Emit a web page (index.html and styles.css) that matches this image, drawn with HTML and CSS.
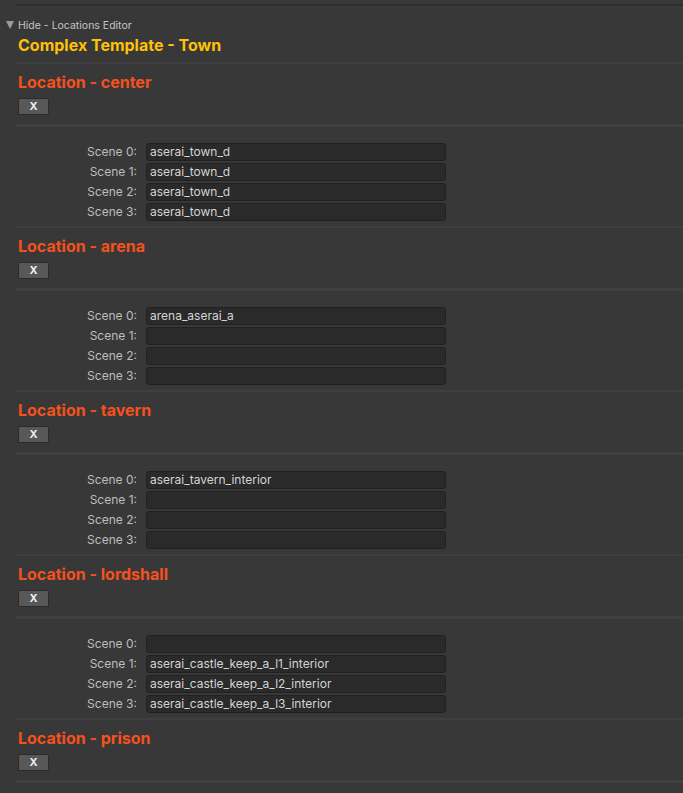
FILE: index.html
```html
<!DOCTYPE html>
<html>
<head>
<meta charset="utf-8">
<link rel="stylesheet" href="styles.css">
</head>
<body>
<div class="editor">
  <div class="sep sep-top"></div>
  <div class="foldout"><span class="tri"></span><span>Hide - Locations Editor</span></div>
  <div class="title">Complex Template - Town</div>
  <div class="sep sep-title"></div>

  <section class="loc">
    <div class="heading">Location - center</div>
    <button class="xbtn">X</button>
    <div class="sep sep-btn"></div>
    <div class="rows">
      <label class="lbl">Scene 0:</label><div class="field">aserai_town_d</div>
      <label class="lbl">Scene 1:</label><div class="field">aserai_town_d</div>
      <label class="lbl">Scene 2:</label><div class="field">aserai_town_d</div>
      <label class="lbl">Scene 3:</label><div class="field">aserai_town_d</div>
    </div>
    <div class="sep sep-end"></div>
  </section>

  <section class="loc">
    <div class="heading">Location - arena</div>
    <button class="xbtn">X</button>
    <div class="sep sep-btn"></div>
    <div class="rows">
      <label class="lbl">Scene 0:</label><div class="field">arena_aserai_a</div>
      <label class="lbl">Scene 1:</label><div class="field"></div>
      <label class="lbl">Scene 2:</label><div class="field"></div>
      <label class="lbl">Scene 3:</label><div class="field"></div>
    </div>
    <div class="sep sep-end"></div>
  </section>

  <section class="loc">
    <div class="heading">Location - tavern</div>
    <button class="xbtn">X</button>
    <div class="sep sep-btn"></div>
    <div class="rows">
      <label class="lbl">Scene 0:</label><div class="field">aserai_tavern_interior</div>
      <label class="lbl">Scene 1:</label><div class="field"></div>
      <label class="lbl">Scene 2:</label><div class="field"></div>
      <label class="lbl">Scene 3:</label><div class="field"></div>
    </div>
    <div class="sep sep-end"></div>
  </section>

  <section class="loc">
    <div class="heading">Location - lordshall</div>
    <button class="xbtn">X</button>
    <div class="sep sep-btn"></div>
    <div class="rows">
      <label class="lbl">Scene 0:</label><div class="field"></div>
      <label class="lbl">Scene 1:</label><div class="field">aserai_castle_keep_a_l1_interior</div>
      <label class="lbl">Scene 2:</label><div class="field">aserai_castle_keep_a_l2_interior</div>
      <label class="lbl">Scene 3:</label><div class="field">aserai_castle_keep_a_l3_interior</div>
    </div>
    <div class="sep sep-end"></div>
  </section>

  <section class="loc">
    <div class="heading">Location - prison</div>
    <button class="xbtn">X</button>
    <div class="sep sep-btn"></div>
  </section>
</div>
</body>
</html>
```
FILE: styles.css
```css
html, body {
  margin: 0;
  padding: 0;
  background: #383838;
  height: 100%;
  overflow: hidden;
}
body {
  font-family: "Inter", "Noto Sans", sans-serif;
  color: #c8c8c8;
}
.editor {
  display: flex;
  flex-direction: column;
}
.sep {
  height: 2px;
  margin-left: 15px;
  background: #3f3f3f;
}
.sep-top {
  margin-top: 4px;
  background: #2f2f2f;
}
.foldout {
  height: 18px;
  margin-top: 10px;
  display: flex;
  align-items: center;
  font-size: 10.5px;
  color: #c4c4c4;
}
.tri {
  width: 0;
  height: 0;
  margin-left: 6px;
  margin-right: 4px;
  border-left: 4px solid transparent;
  border-right: 4px solid transparent;
  border-top: 8px solid #9a9a9a;
}
.title {
  height: 20px;
  line-height: 20px;
  margin-top: 1px;
  padding-left: 18px;
  font-size: 16px;
  font-weight: 700;
  color: #ffc107;
}
.sep-title {
  margin-top: 7px;
}
.loc {
  display: flex;
  flex-direction: column;
}
.heading {
  height: 20px;
  line-height: 20px;
  margin-top: 8px;
  padding-left: 18px;
  font-size: 16px;
  font-weight: 700;
  color: #f4511e;
}
.xbtn {
  align-self: flex-start;
  margin: 6px 0 0 18px;
  width: 31px;
  height: 17px;
  padding: 0;
  background: #585858;
  border: 1px solid #2b2b2b;
  border-radius: 2px;
  color: #eeeeee;
  font-family: "Inter", sans-serif;
  font-size: 11px;
  font-weight: 700;
  line-height: 15px;
}
.sep-btn {
  margin-top: 9px;
  height: 3px;
}
.rows {
  margin-top: 16px;
  margin-left: 67px;
  display: grid;
  grid-template-columns: 70px 300px;
  column-gap: 9px;
  row-gap: 2px;
}
.lbl {
  height: 18px;
  line-height: 18px;
  text-align: right;
  white-space: nowrap;
  font-size: 12px;
  color: #bdbdbd;
}
.field {
  box-sizing: border-box;
  height: 18px;
  line-height: 16px;
  padding-left: 3px;
  background: #2a2a2a;
  border: 1px solid #212121;
  border-radius: 3px;
  font-size: 12px;
  color: #d4d4d4;
  white-space: nowrap;
  overflow: hidden;
}
.sep-end {
  margin-top: 5px;
}
```
